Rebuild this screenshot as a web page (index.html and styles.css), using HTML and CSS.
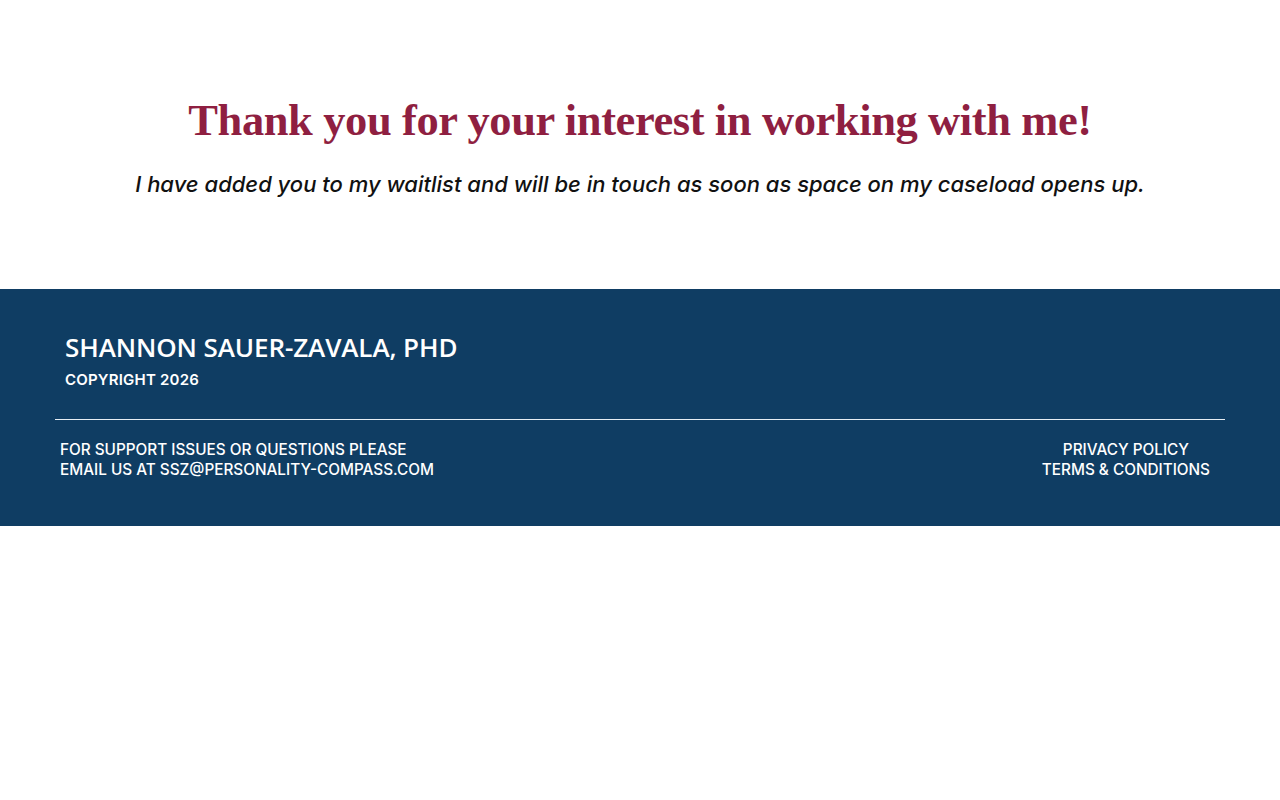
FILE: index.html
```html
<!DOCTYPE html>
<html lang="en">
<head>
<meta charset="utf-8">
<title>Thank you</title>
<link rel="stylesheet" href="styles.css">
</head>
<body>
<main class="hero">
  <h1 class="title">Thank you for your interest in working with me!</h1>
  <p class="subtitle">I have added you to my waitlist and will be in touch as soon as space on my caseload opens up.</p>
</main>
<footer class="footer">
  <div class="brand">
    <div class="brand-name">SHANNON SAUER-ZAVALA, PHD</div>
    <div class="copyright">COPYRIGHT 2026</div>
  </div>
  <hr class="divider">
  <div class="bottom">
    <div class="support">FOR SUPPORT ISSUES OR QUESTIONS PLEASE<br>EMAIL US AT SSZ@PERSONALITY-COMPASS.COM</div>
    <div class="links">
      <a href="#" class="link">PRIVACY POLICY</a>
      <a href="#" class="link">TERMS &amp; CONDITIONS</a>
    </div>
  </div>
</footer>
</body>
</html>
```
FILE: styles.css
```css
html, body {
  margin: 0;
  padding: 0;
  background: #ffffff;
}
.hero {
  padding: 92px 0 89px;
  text-align: center;
}
.title {
  margin: 0;
  font-family: "Liberation Serif", "DejaVu Serif", serif;
  font-weight: bold;
  font-size: 44.5px;
  line-height: 56px;
  color: #8f1f41;
  letter-spacing: -0.4px;
}
.subtitle {
  margin: 20px 0 0;
  font-family: Inter, "Open Sans", sans-serif;
  font-style: italic;
  font-weight: 500;
  font-size: 22px;
  line-height: 32px;
  color: #111111;
}
.footer {
  background: #0f3d63;
  padding: 40px 55px 46px;
  color: #ffffff;
  font-family: Inter, "Open Sans", sans-serif;
}
.brand {
  padding: 0 10px;
}
.brand-name {
  font-family: "Open Sans", sans-serif;
  font-size: 26px;
  line-height: 36px;
  font-weight: 600;
  letter-spacing: -0.1px;
}
.copyright {
  font-size: 15px;
  line-height: 20px;
  font-weight: 600;
  margin-top: 5px;
  letter-spacing: 0.2px;
}
.divider {
  border: 0;
  border-top: 1px solid #e6edf3;
  margin: 29px 0 20px;
}
.bottom {
  display: flex;
  justify-content: space-between;
  padding: 0 15px 0 5px;
  font-size: 15.3px;
  line-height: 20px;
  font-weight: 500;
}
.links {
  display: flex;
  flex-direction: column;
  align-items: center;
}
.link {
  color: #ffffff;
  text-decoration: none;
}
```
